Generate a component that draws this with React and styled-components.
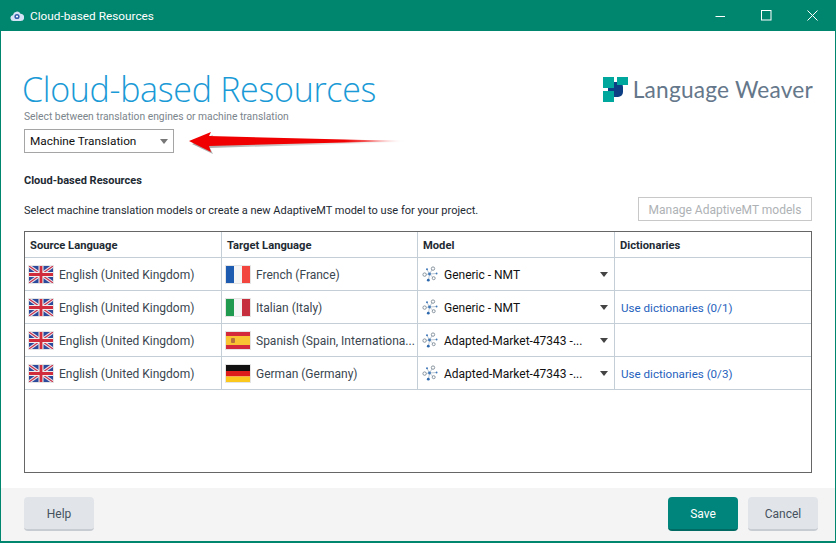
import styled, { createGlobalStyle } from "styled-components";

const GlobalStyle = createGlobalStyle`
  html, body { margin: 0; padding: 0; background: #fff; }
  body { font-family: Roboto, "Noto Sans", "Liberation Sans", sans-serif; }
`;

const UK = () => (
  <Flag viewBox="0 0 24 17">
    <rect width="24" height="17" fill="#2b4a9b" />
    <path d="M0 0L24 17M24 0L0 17" stroke="#e8e4ea" strokeWidth="3.4" />
    <path d="M0 0L24 17M24 0L0 17" stroke="#c9304a" strokeWidth="1.1" />
    <path d="M12 0V17M0 8.5H24" stroke="#eee" strokeWidth="5" />
    <path d="M12 0V17M0 8.5H24" stroke="#d02c3c" strokeWidth="2.8" />
  </Flag>
);

const France = () => (
  <Flag viewBox="0 0 24 17">
    <rect width="8" height="17" fill="#1d5bb0" />
    <rect x="8" width="8" height="17" fill="#f5f5f5" />
    <rect x="16" width="8" height="17" fill="#f2453d" />
  </Flag>
);

const Italy = () => (
  <Flag viewBox="0 0 24 17">
    <rect width="8" height="17" fill="#1f9a4e" />
    <rect x="8" width="8" height="17" fill="#f5f5f5" />
    <rect x="16" width="8" height="17" fill="#c62f3d" />
  </Flag>
);

const Spain = () => (
  <Flag viewBox="0 0 24 17">
    <rect width="24" height="17" fill="#d4293a" />
    <rect y="4" width="24" height="9" fill="#f9c433" />
    <rect x="5" y="6" width="4" height="5" rx="1" fill="#b8713a" />
  </Flag>
);

const Germany = () => (
  <Flag viewBox="0 0 24 17">
    <rect width="24" height="6" fill="#111" />
    <rect y="6" width="24" height="5.5" fill="#dd1c1c" />
    <rect y="11.5" width="24" height="5.5" fill="#fbc81e" />
  </Flag>
);

const ModelIcon = () => (
  <svg width="16" height="16" viewBox="0 0 16 16" fill="none">
    <path d="M7.5 8L3 8.5M7.5 8L5 3.5M7.5 8L10.5 3M7.5 8L14.5 7.5M7.5 8L6.5 14M7.5 8L11.5 12" stroke="#9fb0c0" strokeWidth="0.7" />
    <circle cx="2.6" cy="8.6" r="1.7" stroke="#7d8a95" strokeWidth="0.9" fill="#fff" />
    <circle cx="5" cy="3.2" r="1" fill="#3f78b8" />
    <circle cx="11" cy="2.6" r="1.7" stroke="#7d8a95" strokeWidth="0.9" fill="#fff" />
    <circle cx="7.5" cy="8" r="1.4" fill="#3f78b8" />
    <circle cx="14.6" cy="7.5" r="0.9" fill="#3f78b8" />
    <circle cx="6.3" cy="14.2" r="1.4" fill="#2f69ad" />
    <circle cx="11.7" cy="12.2" r="1.5" stroke="#7d8a95" strokeWidth="0.9" fill="#fff" />
  </svg>
);

const rows = [
  { flag: <France />, target: "French (France)", model: "Generic - NMT", dict: "" },
  { flag: <Italy />, target: "Italian (Italy)", model: "Generic - NMT", dict: "Use dictionaries (0/1)" },
  { flag: <Spain />, target: "Spanish (Spain, Internationa...", model: "Adapted-Market-47343 -...", dict: "" },
  { flag: <Germany />, target: "German (Germany)", model: "Adapted-Market-47343 -...", dict: "Use dictionaries (0/3)" },
];

export default function App() {
  return (
    <Window>
      <GlobalStyle />
      <TitleBar>
        <svg width="14" height="12" viewBox="0 0 14 12">
          <path d="M4 11a3 3 0 0 1-1-6 4 4 0 0 1 7.5-1.2A3.6 3.6 0 0 1 10.500 11z" fill="#d5e2f5" />
          <circle cx="7" cy="6.500" r="2.600" fill="#2f5da8" />
          <circle cx="7" cy="6.500" r="1.100" fill="#fff" />
        </svg>
        <TitleText>Cloud-based Resources</TitleText>
        <WindowControls>
          <svg width="13" height="13" viewBox="0 0 13 13"><path d="M1.500 7.500H11" stroke="#fff" /></svg>
          <svg width="13" height="13" viewBox="0 0 13 13"><rect x="1.500" y="1.500" width="9.500" height="9.500" fill="none" stroke="#fff" /></svg>
          <svg width="13" height="13" viewBox="0 0 13 13"><path d="M1.500 1.500L11.500 11.500M11.500 1.500L1.500 11.500" stroke="#fff" /></svg>
        </WindowControls>
      </TitleBar>
      <Main>
        <Head>
          <div>
            <Heading>Cloud-based Resources</Heading>
            <Hint>Select between translation engines or machine translation</Hint>
            <Select>
              Machine Translation
              <Caret />
            </Select>
          </div>
          <Logo>
            <svg width="25" height="25" viewBox="0 0 25 25">
              <rect x="5" y="5" width="15" height="15" rx="5" fill="#0d3f85" />
              <rect x="0" y="0" width="11" height="11" fill="#00a79d" />
              <rect x="14" y="0" width="11" height="8" fill="#00a79d" />
              <rect x="0" y="14" width="11" height="11" fill="#00a79d" />
            </svg>
            <LogoText>Language Weaver</LogoText>
          </Logo>
          <Arrow width="218" height="28" viewBox="0 0 218 28">
            <defs>
              <linearGradient id="shaft" x1="0" x2="1" y1="0" y2="0">
                <stop offset="0" stopColor="#f00000" />
                <stop offset="0.72" stopColor="#f00000" />
                <stop offset="1" stopColor="#f00000" stopOpacity="0" />
              </linearGradient>
              <linearGradient id="shade" x1="0" x2="1" y1="0" y2="0">
                <stop offset="0" stopColor="#000" stopOpacity="0.35" />
                <stop offset="0.7" stopColor="#000" stopOpacity="0.1" />
                <stop offset="1" stopColor="#000" stopOpacity="0" />
              </linearGradient>
            </defs>
            <path d="M3 16L24 26L21 20L216 14L21 12L24 7z" fill="url(#shade)" />
            <path d="M0 13L22 4L20 8L216 13L20 18L22 24z" fill="url(#shaft)" />
          </Arrow>
        </Head>
        <SectionTitle>Cloud-based Resources</SectionTitle>
        <ActionRow>
          <Description>Select machine translation models or create a new AdaptiveMT model to use for your project.</Description>
          <ManageButton>Manage AdaptiveMT models</ManageButton>
        </ActionRow>
        <TableFrame>
          <Grid>
            <HeaderCell>Source Language</HeaderCell>
            <HeaderCell>Target Language</HeaderCell>
            <HeaderCell>Model</HeaderCell>
            <HeaderCell>Dictionaries</HeaderCell>
            {rows.map((r) => (
              <Row key={r.target}>
                <Cell><UK /><CellText>English (United Kingdom)</CellText></Cell>
                <Cell>{r.flag}<CellText>{r.target}</CellText></Cell>
                <Cell>
                  <ModelIcon />
                  <ModelText>{r.model}</ModelText>
                  <Caret $dark />
                </Cell>
                <Cell>{r.dict && <DictLink>{r.dict}</DictLink>}</Cell>
              </Row>
            ))}
          </Grid>
        </TableFrame>
      </Main>
      <Footer>
        <FooterButton>Help</FooterButton>
        <FooterRight>
          <FooterButton $primary>Save</FooterButton>
          <FooterButton>Cancel</FooterButton>
        </FooterRight>
      </Footer>
    </Window>
  );
}

const Window = styled.div`
  width: 836px;
  height: 543px;
  box-sizing: border-box;
  border: solid #00856f;
  border-width: 0 1px 2px 1px;
  display: flex;
  flex-direction: column;
  overflow: hidden;
  color: #1e2a33;
`;

const TitleBar = styled.div`
  height: 31px;
  margin: 0 -1px;
  flex: none;
  background: #00856f;
  display: flex;
  align-items: center;
  padding-left: 10px;
  color: #fff;
`;

const TitleText = styled.span`
  margin-left: 6px;
  font-size: 11.8px;
`;

const WindowControls = styled.div`
  margin-left: auto;
  margin-right: 17px;
  display: flex;
  gap: 33px;
  height: 13px;
`;

const Main = styled.div`
  flex: 1;
  padding: 0 23px;
  display: flex;
  flex-direction: column;
`;

const Head = styled.div`
  position: relative;
  display: flex;
  justify-content: space-between;
  padding-top: 37px;
  height: 122px;
  box-sizing: border-box;
`;

const Heading = styled.h1`
  margin: 0 0 0 -2px;
  font-family: "Open Sans", sans-serif;
  font-size: 34px;
  font-weight: 300;
  line-height: 42px;
  color: #1a9ad6;
  letter-spacing: -0.3px;
`;

const Hint = styled.div`
  font-size: 10.3px;
  line-height: 14px;
  color: #7b858c;
`;

const Select = styled.div`
  width: 150px;
  height: 24px;
  box-sizing: border-box;
  margin-top: 5px;
  border: 1px solid #a5a5a5;
  display: flex;
  align-items: center;
  justify-content: space-between;
  padding: 0 5px;
  font-size: 11.8px;
  color: #111;
`;

const Caret = styled.span`
  width: 0;
  height: 0;
  margin-left: auto;
  flex: none;
  border-left: 4.500px solid transparent;
  border-right: 4.500px solid transparent;
  border-top: 5px solid ${(p) => (p.$dark ? "#444" : "#777")};
  margin-right: ${(p) => (p.$dark ? "6px" : "0")};
`;

const Arrow = styled.svg`
  position: absolute;
  left: 165px;
  top: 97px;
`;

const Logo = styled.div`
  display: flex;
  align-items: center;
  gap: 5px;
  height: 25px;
  margin-top: 9px;
  margin-right: -1px;
`;

const LogoText = styled.span`
  font-family: "Lato", sans-serif;
  font-size: 22.7px;
  color: #65778a;
  letter-spacing: 0.2px;
`;

const SectionTitle = styled.div`
  font-size: 11px;
  font-weight: 700;
  line-height: 16px;
  margin-top: 20px;
  color: #1e2a33;
`;

const ActionRow = styled.div`
  display: flex;
  justify-content: space-between;
  align-items: flex-end;
  margin-top: 8px;
`;

const Description = styled.div`
  font-size: 11px;
  line-height: 16px;
  padding-bottom: 2px;
  color: #1e2a33;
`;

const ManageButton = styled.div`
  width: 174px;
  height: 24px;
  box-sizing: border-box;
  border: 1px solid #c8c8c8;
  padding-top: 2px;
  display: flex;
  align-items: center;
  justify-content: center;
  font-size: 12px;
  color: #aeb2b5;
`;

const TableFrame = styled.div`
  margin-top: 10px;
  height: 242px;
  box-sizing: border-box;
  border: 1px solid #666;
`;

const Grid = styled.div`
  display: grid;
  grid-template-columns: 197px 196px 197px 196px;
`;

const HeaderCell = styled.div`
  height: 26px;
  box-sizing: border-box;
  display: flex;
  align-items: center;
  padding: 2px 0 0 5px;
  font-size: 11.2px;
  font-weight: 700;
  color: #1e2a33;
  border-right: 1px solid #c3ced6;
  border-bottom: 1px solid #c3ced6;
  &:nth-child(4) { border-right: none; }
`;

const Row = styled.div`
  display: contents;
`;

const Cell = styled.div`
  height: 33px;
  min-width: 0;
  box-sizing: border-box;
  display: flex;
  align-items: center;
  padding-left: 4px;
  gap: 6px;
  border-right: 1px solid #c3ced6;
  border-bottom: 1px solid #c3ced6;
  &:last-child { border-right: none; padding-left: 6px; }
`;

const Flag = styled.svg`
  width: 24px;
  height: 17px;
  flex: none;
  outline: 1px solid rgba(120, 120, 120, 0.2);
`;

const CellText = styled.span`
  font-size: 12px;
  padding-top: 2px;
  color: #3a4650;
  white-space: nowrap;
`;

const ModelText = styled.span`
  font-size: 12px;
  padding-top: 2px;
  color: #111;
  white-space: nowrap;
`;

const DictLink = styled.a`
  font-size: 11.6px;
  padding-top: 2px;
  color: #1f62bd;
`;

const Footer = styled.div`
  height: 53px;
  flex: none;
  margin-top: 15px;
  background: #f4f4f4;
  box-sizing: border-box;
  padding: 9px 17px 10px 23px;
  display: flex;
  justify-content: space-between;
`;

const FooterRight = styled.div`
  display: flex;
  gap: 10px;
`;

const FooterButton = styled.div`
  width: 70px;
  height: 34px;
  box-sizing: border-box;
  border-radius: 4px;
  padding-top: 2px;
  display: flex;
  align-items: center;
  justify-content: center;
  font-size: 12px;
  background: ${(p) => (p.$primary ? "#00857c" : "#e1e5e9")};
  color: ${(p) => (p.$primary ? "#fff" : "#46525e")};
  border-bottom: 2px solid ${(p) => (p.$primary ? "#006a63" : "#c7ccd2")};
`;
